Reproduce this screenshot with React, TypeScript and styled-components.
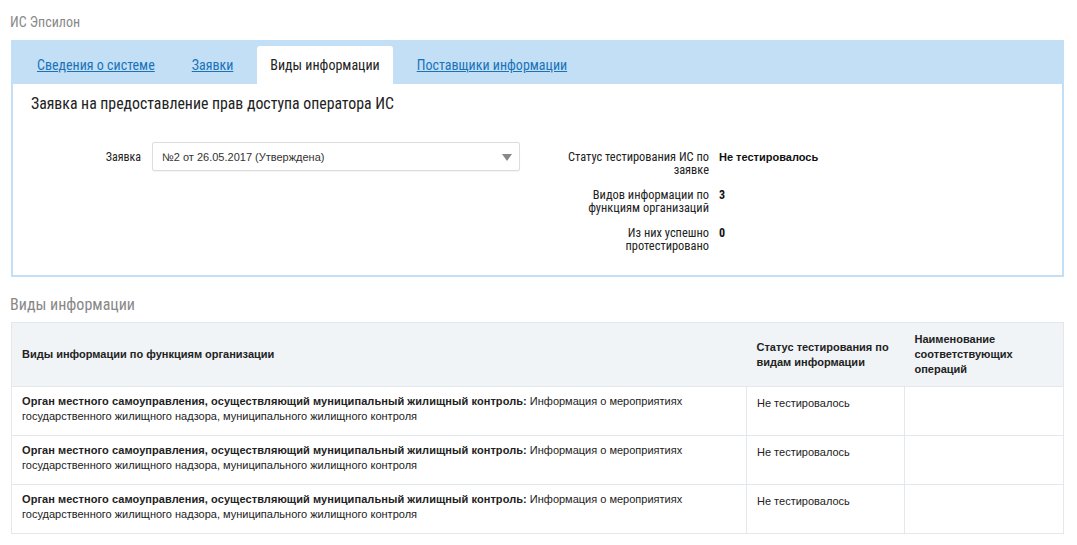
import React from "react"
import styled, { createGlobalStyle } from "styled-components"

const GlobalStyle = createGlobalStyle`
  html, body {
    margin: 0;
    padding: 0;
    background: #fff;
  }
  body {
    font-family: "Roboto Condensed", "DejaVu Sans Condensed", Roboto, sans-serif;
    color: #222;
  }
`

const condensed = `"Roboto Condensed", "DejaVu Sans Condensed", Roboto, sans-serif`
const arial = `"Liberation Sans", Arial, sans-serif`

const Page = styled.div`
  width: 1077px;
  padding: 0 13px 0 11px;
  box-sizing: border-box;
`

const PageTitle = styled.h1`
  margin: 0 0 0 -1px;
  padding: 12px 0 0;
  height: 28px;
  font-family: ${condensed};
  font-size: 14px;
  font-weight: 400;
  line-height: 20px;
  color: #888;
`

const Panel = styled.section`
  background: #c2dff6;
  padding: 0 2px 2px;
`

const TabBar = styled.nav`
  display: flex;
  align-items: flex-end;
  height: 44px;
  padding-left: 11px;
`

const Tab = styled.a<{ $active?: boolean }>`
  display: flex;
  align-items: center;
  height: 38px;
  padding: 0 13px;
  margin-right: 11px;
  border-radius: 3px 3px 0 0;
  font-family: ${condensed};
  font-size: 14px;
  line-height: 20px;
  background: ${({ $active }) => ($active ? "#fff" : "transparent")};
  color: ${({ $active }) => ($active ? "#222" : "#1a73b8")};
  text-decoration: ${({ $active }) => ($active ? "none" : "underline")};
  cursor: pointer;
`

const PanelBody = styled.div`
  background: #fff;
  padding: 10px 18px 23px;
`

const PanelHeading = styled.h2`
  margin: 0 0 28px;
  font-family: ${condensed};
  font-size: 15.8px;
  font-weight: 400;
  line-height: 20px;
  color: #222;
`

const FormGrid = styled.div`
  display: flex;
  align-items: flex-start;
`

const FieldRow = styled.div`
  display: flex;
  align-items: center;
  gap: 11px;
`

const FieldLabel = styled.label`
  width: 110px;
  text-align: right;
  font-family: ${condensed};
  font-size: 12px;
  color: #222;
`

const Select = styled.div`
  position: relative;
  width: 368px;
  height: 29px;
  box-sizing: border-box;
  border: 1px solid #dcdcdc;
  border-radius: 2px;
  box-shadow: 0 1px 1px rgba(0, 0, 0, 0.04);
  display: flex;
  align-items: center;
  padding: 0 30px 0 9px;
  font-family: ${arial};
  font-size: 11px;
  color: #333;
`

const Caret = styled.span`
  position: absolute;
  right: 7px;
  top: 11px;
  width: 0;
  height: 0;
  border-left: 5px solid transparent;
  border-right: 5px solid transparent;
  border-top: 7px solid #888;
`

const InfoList = styled.dl`
  margin: 8px 0 0 39px;
  display: flex;
  flex-direction: column;
  gap: 12px;
`

const InfoRow = styled.div`
  display: flex;
  gap: 10px;
`

const InfoLabel = styled.dt`
  width: 150px;
  text-align: right;
  font-family: ${condensed};
  font-size: 12.4px;
  line-height: 13px;
  color: #222;
`

const InfoValue = styled.dd<{ $strong?: boolean }>`
  margin: 0;
  font-family: ${({ $strong }) => ($strong ? arial : condensed)};
  font-size: ${({ $strong }) => ($strong ? "11px" : "12px")};
  font-weight: 700;
  line-height: 13px;
  padding-top: 1px;
  color: #111;
`

const SectionTitle = styled.h2`
  margin: 0 0 0 -1px;
  padding: 18px 0 0;
  height: 27px;
  font-family: ${condensed};
  font-size: 16px;
  font-weight: 400;
  line-height: 20px;
  color: #888;
`

const Table = styled.table`
  width: 100%;
  border-collapse: collapse;
  border: 1px solid #e3e8ec;
  table-layout: fixed;
`

const HeadCell = styled.th<{ $w?: number }>`
  width: ${({ $w }) => ($w ? `${$w}px` : "auto")};
  height: 64px;
  box-sizing: border-box;
  padding: 0 10px;
  background: #f0f4f7;
  text-align: left;
  vertical-align: middle;
  font-family: ${arial};
  font-size: 11px;
  font-weight: 700;
  line-height: 15px;
  color: #222;
`

const Row = styled.tr`
  border-top: 1px solid #e3e8ec;
`

const Cell = styled.td`
  height: 49px;
  box-sizing: border-box;
  padding: 7px 10px 0;
  vertical-align: top;
  border-left: 1px solid #e3e8ec;
  font-family: ${arial};
  font-size: 11px;
  line-height: 15px;
  color: #222;

  &:first-child {
    border-left: none;
  }
`

const OrgName = styled.b`
  font-weight: 700;
  letter-spacing: 0.07px;
`

const StatusText = styled.span`
  display: block;
  padding-top: 2px;
`

const tabs = ["Сведения о системе", "Заявки", "Виды информации", "Поставщики информации"]

const info = [
  { label: "Статус тестирования ИС по заявке", value: "Не тестировалось", strong: true },
  { label: "Видов информации по функциям организаций", value: "3" },
  { label: "Из них успешно протестировано", value: "0" },
]

const rows = [1, 2, 3].map((id) => ({
  id,
  org: "Орган местного самоуправления, осуществляющий муниципальный жилищный контроль:",
  text: "Информация о мероприятиях государственного жилищного надзора, муниципального жилищного контроля",
  status: "Не тестировалось",
}))

export default function App() {
  return (
    <>
      <GlobalStyle />
      <Page>
        <PageTitle>ИС Эпсилон</PageTitle>
        <Panel>
          <TabBar>
            {tabs.map((t) => (
              <Tab key={t} $active={t === "Виды информации"}>
                {t}
              </Tab>
            ))}
          </TabBar>
          <PanelBody>
            <PanelHeading>Заявка на предоставление прав доступа оператора ИС</PanelHeading>
            <FormGrid>
              <FieldRow>
                <FieldLabel>Заявка</FieldLabel>
                <Select>
                  №2 от 26.05.2017 (Утверждена)
                  <Caret />
                </Select>
              </FieldRow>
              <InfoList>
                {info.map((i) => (
                  <InfoRow key={i.label}>
                    <InfoLabel>{i.label}</InfoLabel>
                    <InfoValue $strong={i.strong}>{i.value}</InfoValue>
                  </InfoRow>
                ))}
              </InfoList>
            </FormGrid>
          </PanelBody>
        </Panel>
        <SectionTitle>Виды информации</SectionTitle>
        <Table>
          <thead>
            <tr>
              <HeadCell>Виды информации по функциям организации</HeadCell>
              <HeadCell $w={158}>Статус тестирования по видам информации</HeadCell>
              <HeadCell $w={159}>Наименование соответствующих операций</HeadCell>
            </tr>
          </thead>
          <tbody>
            {rows.map((r) => (
              <Row key={r.id}>
                <Cell>
                  <OrgName>{r.org}</OrgName> {r.text}
                </Cell>
                <Cell>
                  <StatusText>{r.status}</StatusText>
                </Cell>
                <Cell />
              </Row>
            ))}
          </tbody>
        </Table>
      </Page>
    </>
  )
}
